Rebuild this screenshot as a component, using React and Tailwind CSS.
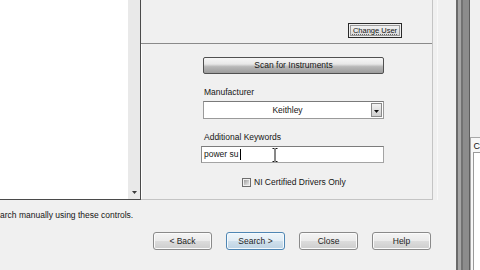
import React from 'react';

const font = "font-['Liberation_Sans',Arial,sans-serif]";

const Button = ({ label, primary }) => (
  <div
    className={`w-[59px] h-[18px] rounded-[3px] border flex items-center justify-center text-[8.5px] leading-none text-[#1e1e1e] ${
      primary
        ? 'border-[#4f86b3] bg-[linear-gradient(#eef5fa_0%,#e2edf5_48%,#cfe0ec_52%,#bdd2e2_100%)] shadow-[inset_0_0_0_1px_#f4fafe]'
        : 'border-[#8a8a8a] bg-[linear-gradient(#f4f4f4_0%,#ebebeb_48%,#dcdcdc_52%,#cdcdcd_100%)] shadow-[inset_0_0_0_1px_#fbfbfb]'
    }`}
  >
    {label}
  </div>
);

const IBeam = () => (
  <svg width="6" height="14" viewBox="0 0 6 14" className="absolute left-[70px] top-[1px]">
    <path d="M0.5 0.5h2M3.5 0.5h2M3 1v12M0.5 13.5h2M3.5 13.5h2" stroke="#111" strokeWidth="1" fill="none" />
  </svg>
);

const App = () => {
  return (
    <div className={`w-[480px] h-[270px] bg-[#f0f0f0] flex overflow-hidden ${font} text-[8.5px] text-[#151515]`}>
      {/* Main dialog area */}
      <div className="w-[458px] flex flex-col">
        <div className="h-[200px] flex">
          {/* Instrument list + scrollbar */}
          <div className="w-[141px] flex border-b border-r border-[#4a4a4a]">
            <div className="w-[128px] bg-white" />
            <div className="flex-1 bg-[#e9e9e9] flex flex-col justify-end items-center pb-[5px]">
              <svg width="5" height="3" viewBox="0 0 5 3">
                <path d="M0 0h5L2.5 3z" fill="#3a3a3a" />
              </svg>
            </div>
          </div>

          {/* Search panel */}
          <div className="w-[292px] flex flex-col border-r border-b border-[#c4c4c4]">
            <div className="h-[44px] flex justify-end items-start pt-[23px] pr-[30px] border-b border-[#8a8a8a]">
              <div className="w-[54px] h-[15px] border border-[#2a2a2a] p-px">
                <div className="h-full border border-[#9a9a9a] bg-[linear-gradient(#f2f2f2,#dadada)] flex items-center justify-center text-[7.5px] leading-none underline decoration-dotted decoration-[#666]">
                  Change User
                </div>
              </div>
            </div>

            <div className="flex-1 pl-[61px] flex flex-col border-l border-white">
              <div className="mt-[13px] w-[181px] h-[17px] border border-[#505050] rounded-[2px] bg-[linear-gradient(#f6f6f6_0%,#e8e8e8_40%,#b8b8b8_58%,#9c9c9c_100%)] flex items-center justify-center leading-none">
                Scan for Instruments
              </div>

              <div className="mt-[13px] h-[10px] leading-[10px] pl-px">Manufacturer</div>
              <div className="mt-[4px] w-[181px] h-[18px] bg-white border border-[#9a9a9a] border-t-[#7a7a7a] flex items-center">
                <div className="flex-1 text-center leading-none">Keithley</div>
                <div className="w-[11px] h-[14px] mr-px border border-[#8a8a8a] bg-[linear-gradient(#f3f3f3,#cfcfcf)] flex items-end justify-center pb-[3px]">
                  <svg width="5" height="3" viewBox="0 0 5 3">
                    <path d="M0 0h5L2.5 3z" fill="#111" />
                  </svg>
                </div>
              </div>

              <div className="mt-[13px] h-[10px] leading-[10px] pl-px">Additional Keywords</div>
              <div className="relative mt-[4px] -ml-[2px] w-[183px] h-[17px] bg-white border border-[#a4a4a4] border-t-[#7c7c7c] border-l-[#8c8c8c] flex items-center pl-[2px]">
                <span className="leading-none">power su</span>
                <span className="w-px h-[11px] bg-black ml-px" />
                <IBeam />
              </div>

              <div className="mt-[14px] ml-[39px] h-[10px] flex items-center gap-[3px]">
                <div className="w-[9px] h-[9px] border border-[#6e6e6e] p-px">
                  <div className="w-full h-full bg-[linear-gradient(135deg,#a0a0a0,#e8e8e8)]" />
                </div>
                <span className="leading-none">NI Certified Drivers Only</span>
              </div>
            </div>
          </div>

          <div className="flex-1 border-l border-[#f8f8f8] ml-[4px]" />
        </div>

        {/* Status line */}
        <div className="h-[32px] pt-[10px] leading-[10px]">arch manually using these controls.</div>

        {/* Dialog buttons */}
        <div className="flex pl-[153px] gap-[14px]">
          <Button label="< Back" />
          <Button label="Search >" primary />
          <Button label="Close" />
          <Button label="Help" />
        </div>
      </div>

      {/* Window edge */}
      <div className="w-[14px] flex">
        <div className="w-[2px] bg-[#6a6a6a]" />
        <div className="w-[3px] bg-[#a6a6a6]" />
        <div className="w-[2px] bg-[#727272]" />
        <div className="w-[6px] bg-[#8c8c8c]" />
        <div className="w-[1px] bg-[#5c5c5c]" />
      </div>

      {/* Neighbouring window */}
      <div className="flex-1 pt-[137px] flex flex-col">
        <div className="flex-1 border-t border-l border-[#a8a8a8] bg-[#f7f7f7] flex flex-col">
          <div className="h-[14px] pl-[3px] pt-[3px] leading-[11px] text-[9px]">C</div>
          <div className="flex-1 ml-[2px] border-t border-l border-[#9a9a9a] bg-white" />
        </div>
      </div>
    </div>
  );
};

export default App;
